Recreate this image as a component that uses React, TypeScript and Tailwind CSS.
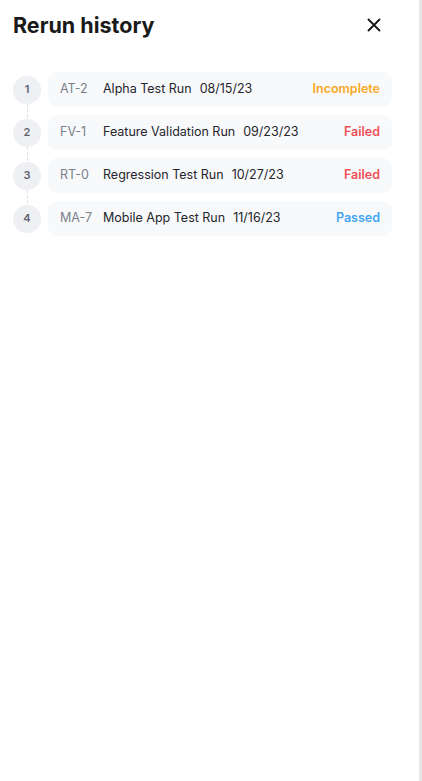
import React from "react";

const runs = [
  { n: 1, id: "AT-2", name: "Alpha Test Run", date: "08/15/23", status: "Incomplete", color: "text-[#f9a825]" },
  { n: 2, id: "FV-1", name: "Feature Validation Run", date: "09/23/23", status: "Failed", color: "text-[#ef4f55]" },
  { n: 3, id: "RT-0", name: "Regression Test Run", date: "10/27/23", status: "Failed", color: "text-[#ef4f55]" },
  { n: 4, id: "MA-7", name: "Mobile App Test Run", date: "11/16/23", status: "Passed", color: "text-[#42a5f5]" },
];

export default function App() {
  return (
    <div className="flex h-[781px] w-full bg-[#e6e6e6] font-['Inter',sans-serif]">
      <div className="h-full w-[419px] bg-white">
        <div className="flex items-center justify-between pl-[13px] pr-[38px] pt-[11px]">
          <h1 className="text-[21.5px] font-bold leading-[28px] text-[#1a1a1a]">Rerun history</h1>
          <svg width="14" height="14" viewBox="0 0 14 14" fill="none" stroke="#1a1a1a" strokeWidth="1.9" strokeLinecap="round">
            <path d="M1.5 1.5l11 11M12.5 1.5l-11 11" />
          </svg>
        </div>
        <div className="mt-[33px] flex flex-col gap-[8px] pl-[13px] pr-[27px]">
          {runs.map((r, i) => (
            <div key={r.n} className="relative flex items-center gap-[7px]">
              {i < runs.length - 1 && (
                <div className="absolute left-[14px] top-[32px] h-[19px] border-l border-dashed border-[#dcdee3]" />
              )}
              <div className="flex h-[28px] w-[28px] shrink-0 items-center justify-center rounded-full bg-[#eff0f4] text-[11px] font-semibold text-[#5f6470]">
                {r.n}
              </div>
              <div className="flex h-[35px] flex-1 items-center rounded-[9px] bg-[#f8f9fb] pl-[12px] pr-[12px] text-[12.5px]">
                <span className="w-[43px] text-[#7a7f8a]">{r.id}</span>
                <span className="text-[#24262b]">{r.name}</span>
                <span className="ml-[8px] text-[#24262b]">{r.date}</span>
                <span className={`ml-auto font-semibold ${r.color}`}>{r.status}</span>
              </div>
            </div>
          ))}
        </div>
      </div>
    </div>
  );
}
